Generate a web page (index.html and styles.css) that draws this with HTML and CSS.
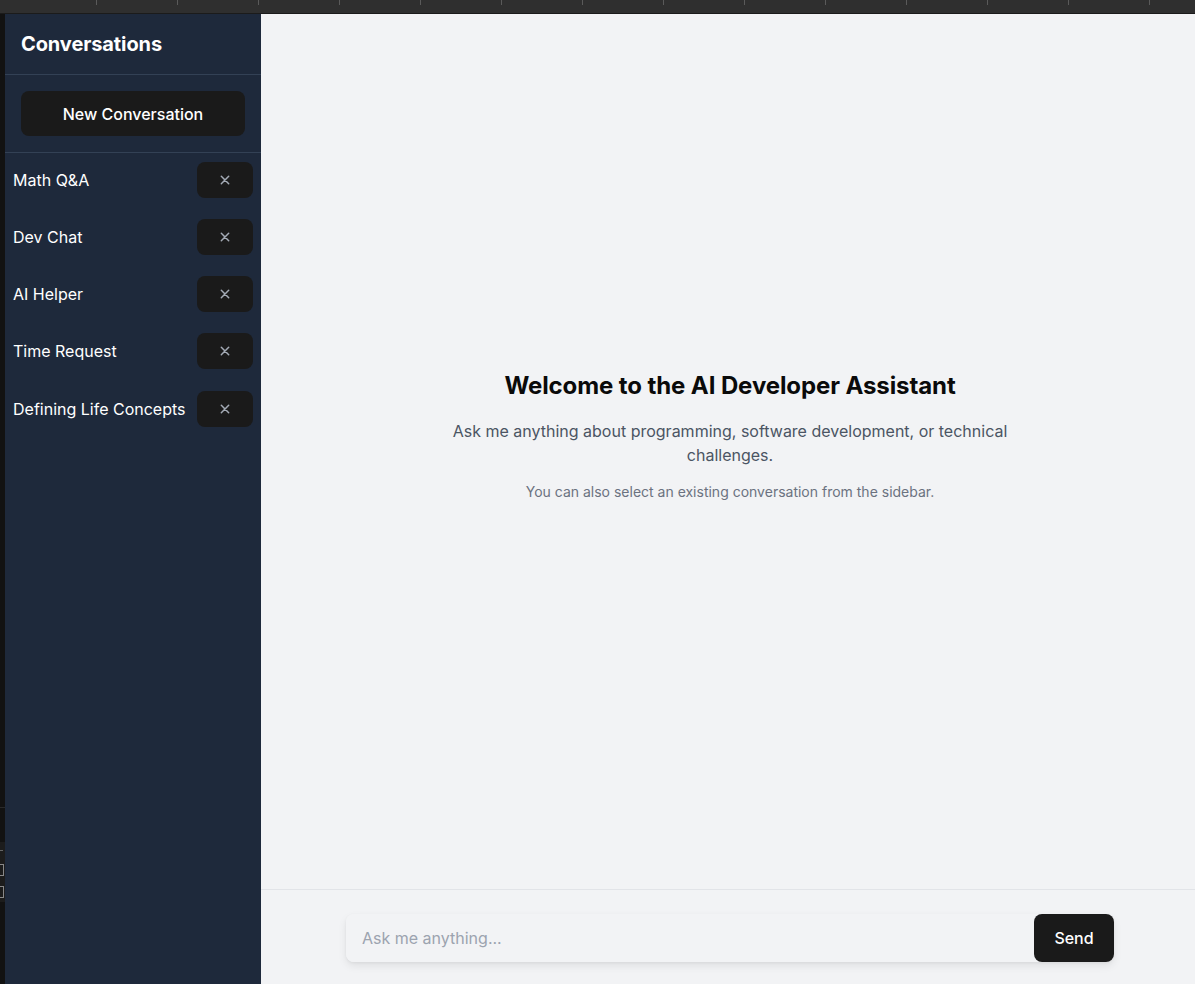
FILE: index.html
```html
<!DOCTYPE html>
<html lang="en">
<head>
<meta charset="utf-8">
<title>AI Developer Assistant</title>
<link rel="stylesheet" href="styles.css">
</head>
<body>
<div class="topbar">
  <div class="tab tab-first"></div>
  <div class="tab"></div><div class="tab"></div><div class="tab"></div><div class="tab"></div>
  <div class="tab"></div><div class="tab"></div><div class="tab"></div><div class="tab"></div>
  <div class="tab"></div><div class="tab"></div><div class="tab"></div><div class="tab"></div>
  <div class="tab"></div><div class="tab"></div>
</div>
<div class="app">
  <div class="edge">
    <div class="edge-top"></div>
    <div class="edge-panel">
      <span class="edge-mark"></span>
      <span class="edge-box"></span>
      <span class="edge-box"></span>
    </div>
  </div>
  <aside class="sidebar">
    <div class="sidebar-header"><h2>Conversations</h2></div>
    <div class="sidebar-action"><button class="new-btn">New Conversation</button></div>
    <ul class="conv-list">
      <li class="conv-item"><span class="conv-title">Math Q&amp;A</span><button class="del-btn" aria-label="Delete"><svg viewBox="0 0 16 16" width="16" height="16"><path d="M4.3 4.3l7.4 7.4M11.7 4.3l-7.4 7.4" stroke="#a3aab5" stroke-width="1.5" stroke-linecap="round" fill="none"/></svg></button></li>
      <li class="conv-item"><span class="conv-title">Dev Chat</span><button class="del-btn" aria-label="Delete"><svg viewBox="0 0 16 16" width="16" height="16"><path d="M4.3 4.3l7.4 7.4M11.7 4.3l-7.4 7.4" stroke="#a3aab5" stroke-width="1.5" stroke-linecap="round" fill="none"/></svg></button></li>
      <li class="conv-item"><span class="conv-title">AI Helper</span><button class="del-btn" aria-label="Delete"><svg viewBox="0 0 16 16" width="16" height="16"><path d="M4.3 4.3l7.4 7.4M11.7 4.3l-7.4 7.4" stroke="#a3aab5" stroke-width="1.5" stroke-linecap="round" fill="none"/></svg></button></li>
      <li class="conv-item"><span class="conv-title">Time Request</span><button class="del-btn" aria-label="Delete"><svg viewBox="0 0 16 16" width="16" height="16"><path d="M4.3 4.3l7.4 7.4M11.7 4.3l-7.4 7.4" stroke="#a3aab5" stroke-width="1.5" stroke-linecap="round" fill="none"/></svg></button></li>
      <li class="conv-item"><span class="conv-title">Defining Life Concepts</span><button class="del-btn" aria-label="Delete"><svg viewBox="0 0 16 16" width="16" height="16"><path d="M4.3 4.3l7.4 7.4M11.7 4.3l-7.4 7.4" stroke="#a3aab5" stroke-width="1.5" stroke-linecap="round" fill="none"/></svg></button></li>
    </ul>
  </aside>
  <main class="main">
    <section class="messages">
      <div class="welcome">
        <h1>Welcome to the AI Developer Assistant</h1>
        <p class="lead">Ask me anything about programming, software development, or technical challenges.</p>
        <p class="hint">You can also select an existing conversation from the sidebar.</p>
      </div>
    </section>
    <form class="composer">
      <div class="composer-inner">
        <input class="composer-input" type="text" placeholder="Ask me anything...">
        <button class="send-btn" type="button">Send</button>
      </div>
    </form>
  </main>
</div>
</body>
</html>
```

FILE: styles.css
```css
* { box-sizing: border-box; }
html, body { margin: 0; padding: 0; height: 100%; }
body {
  font-family: Inter, "Noto Sans", "Liberation Sans", sans-serif;
  background: #111111;
  overflow: hidden;
  display: flex;
  flex-direction: column;
}
.topbar {
  height: 14px;
  flex: none;
  display: flex;
  background: #2f2f2f;
  border-bottom: 1px solid #1b1b1b;
}
.tab {
  width: 81px;
  flex: none;
  position: relative;
}
.tab-first { width: 97px; }
.tab::after {
  content: "";
  position: absolute;
  right: 0;
  top: 0;
  width: 1px;
  height: 5px;
  background: #5a5a5a;
}
.app {
  flex: 1;
  display: flex;
  min-height: 0;
}
.edge {
  width: 5px;
  flex: none;
  background: #121212;
  display: flex;
  flex-direction: column;
}
.edge-top {
  height: 794px;
  border-bottom: 1px solid #2a2a2a;
}
.edge-panel {
  margin-top: 34px;
  height: 60px;
  background: #1c1c1c;
  display: flex;
  flex-direction: column;
  gap: 10px;
  padding-top: 8px;
}
.edge-mark {
  height: 4px;
  width: 3px;
  border-top: 1px solid #666;
}
.edge-box {
  height: 12px;
  width: 4px;
  border: 1px solid #888;
  border-left: none;
}
.sidebar {
  width: 256px;
  flex: none;
  background: #1e293b;
  color: #ffffff;
  display: flex;
  flex-direction: column;
}
.sidebar-header {
  padding: 16px;
  border-bottom: 1px solid #334155;
}
.sidebar-header h2 {
  margin: 0;
  font-size: 20px;
  line-height: 28px;
  font-weight: 700;
  letter-spacing: -0.1px;
}
.sidebar-action {
  padding: 16px;
  border-bottom: 1px solid #334155;
}
.new-btn {
  width: 100%;
  height: 45px;
  background: #1a1a1a;
  color: #ffffff;
  border: none;
  border-radius: 8px;
  font-family: inherit;
  font-size: 16px;
  font-weight: 500;
}
.conv-list {
  list-style: none;
  margin: 0;
  padding: 1px 0 0;
}
.conv-item {
  display: flex;
  align-items: center;
  justify-content: space-between;
  padding: 8px 8px;
  margin-bottom: 5px;
  gap: 8px;
}
.conv-item:last-child { padding-top: 9px; }
.conv-title {
  font-size: 16px;
  line-height: 24px;
  color: #ffffff;
  white-space: nowrap;
}
.del-btn {
  width: 56px;
  height: 36px;
  flex: none;
  background: #1a1a1a;
  border: none;
  border-radius: 8px;
  display: flex;
  align-items: center;
  justify-content: center;
  padding: 0;
}
.main {
  flex: 1;
  background: #f2f3f5;
  display: flex;
  flex-direction: column;
  min-width: 0;
}
.messages {
  flex: 1;
  display: flex;
  align-items: center;
  justify-content: center;
  padding: 16px 14px 48px 18px;
}
.welcome {
  text-align: center;
  max-width: 576px;
}
.welcome h1 {
  margin: 0 0 17px;
  font-size: 24px;
  line-height: 32px;
  font-weight: 700;
  letter-spacing: -0.1px;
  color: #0a0a0a;
}
.lead {
  margin: 0 0 15px;
  font-size: 16px;
  line-height: 24px;
  color: #4b5563;
}
.hint {
  margin: 0;
  font-size: 14px;
  line-height: 20px;
  color: #6b7280;
}
.composer {
  flex: none;
  margin: 0;
  border-top: 1px solid #e2e4e8;
  padding: 24px 14px 22px 18px;
}
.composer-inner {
  max-width: 768px;
  margin: 0 auto;
  display: flex;
  border-radius: 8px;
  box-shadow: 0 4px 8px rgba(0, 0, 0, 0.08), 0 1px 3px rgba(0, 0, 0, 0.05);
}
.composer-input {
  flex: 1;
  height: 48px;
  border: none;
  outline: none;
  background: #f2f3f5;
  border-radius: 8px 0 0 8px;
  padding: 0 16px;
  font-family: inherit;
  font-size: 16px;
  color: #111;
}
.composer-input::placeholder { color: #9ca3af; }
.send-btn {
  width: 80px;
  height: 48px;
  flex: none;
  background: #1a1a1a;
  color: #ffffff;
  border: none;
  border-radius: 8px;
  font-family: inherit;
  font-size: 16px;
  font-weight: 500;
}
```
